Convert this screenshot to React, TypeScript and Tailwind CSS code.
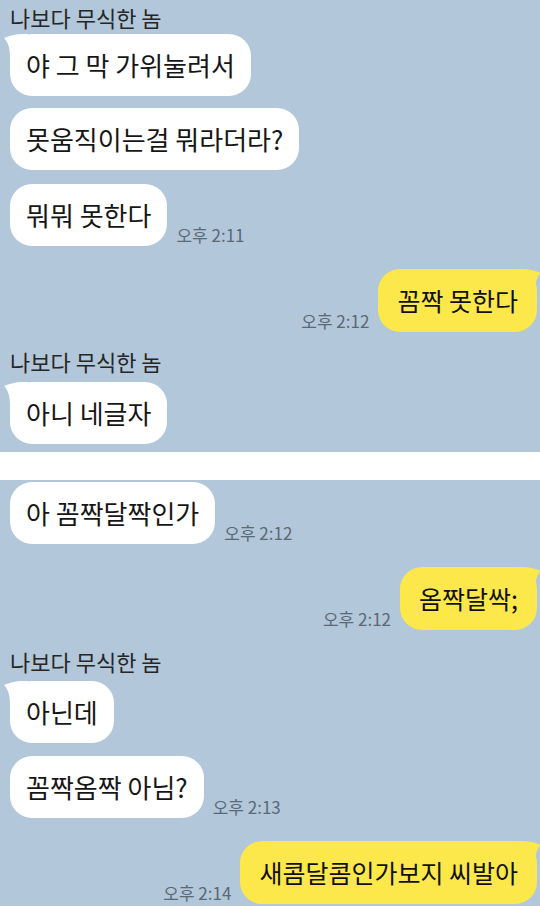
const FONT = "font-['Noto_Sans_CJK_KR','Noto_Sans',sans-serif]";

type BubbleProps = {
  text: string;
  tail?: boolean;
  className?: string;
};

const LeftTail = () => (
  <svg
    className="absolute -left-[6px] top-0"
    width="24"
    height="24"
    viewBox="0 0 24 24"
  >
    <path d="M0 4 C5 2 12 0 18 0 L24 0 L24 24 L6 24 C6 14 4 8 0 4 Z" fill="#ffffff" />
  </svg>
);

const RightTail = () => (
  <svg
    className="absolute -right-[4px] top-0 -scale-x-100"
    width="24"
    height="24"
    viewBox="0 0 24 24"
  >
    <path d="M0 4 C5 2 12 0 18 0 L24 0 L24 24 L6 24 C6 14 4 8 0 4 Z" fill="#fce84a" />
  </svg>
);

const Name = ({ className = "" }: { className?: string }) => (
  <div className={`text-[22px] leading-[28px] text-[#262626] ${className}`}>
    나보다 무식한 놈
  </div>
);

const Time = ({ time }: { time: string }) => (
  <span className="text-[17px] leading-[20px] text-[#5a6877] mb-[1px] whitespace-nowrap">
    {time}
  </span>
);

const WhiteBubble = ({ text, tail, className = "" }: BubbleProps) => (
  <div
    className={`relative bg-white rounded-[22px] px-[16px] py-[15px] text-[26px] leading-[32px] text-[#161616] whitespace-nowrap ${className}`}
  >
    {tail && <LeftTail />}
    <span className="relative">{text}</span>
  </div>
);

const YellowBubble = ({ text, tail, className = "" }: BubbleProps) => (
  <div
    className={`relative bg-[#fce84a] rounded-[22px] px-[19px] py-[15px] text-[25px] leading-[33px] text-[#111111] whitespace-nowrap ${className}`}
  >
    {tail && <RightTail />}
    <span className="relative">{text}</span>
  </div>
);

const Incoming = ({ text, tail, time, className = "" }: BubbleProps & { time?: string }) => (
  <div className={`flex items-end gap-[9px] ${className}`}>
    <WhiteBubble text={text} tail={tail} />
    {time && <Time time={time} />}
  </div>
);

const Outgoing = ({ text, time, className = "" }: { text: string; time: string; className?: string }) => (
  <div className={`flex items-end justify-end gap-[9px] ${className}`}>
    <Time time={time} />
    <YellowBubble text={text} tail />
  </div>
);

export default function App() {
  return (
    <div className={`w-[540px] h-[906px] bg-white flex flex-col overflow-hidden ${FONT}`}>
      {/* first screenshot */}
      <div className="h-[452px] bg-[#b2c7d9] flex flex-col pl-[10px] pr-[3px] pt-[3px] overflow-hidden">
        <Name />
        <div className="flex mt-[3px]">
          <WhiteBubble text="야 그 막 가위눌려서" tail />
        </div>
        <div className="flex mt-[12px]">
          <WhiteBubble text="못움직이는걸 뭐라더라?" />
        </div>
        <Incoming text="뭐뭐 못한다" time="오후 2:11" className="mt-[14px]" />
        <Outgoing text="꼼짝 못한다" time="오후 2:12" className="mt-[23px]" />
        <Name className="mt-[15px]" />
        <div className="flex mt-[7px]">
          <WhiteBubble text="아니 네글자" tail />
        </div>
      </div>

      {/* second screenshot */}
      <div className="h-[426px] mt-[28px] bg-[#b2c7d9] flex flex-col pl-[10px] pr-[3px] pt-[2px] overflow-hidden">
        <Incoming text="아 꼼짝달짝인가" time="오후 2:12" />
        <Outgoing text="옴짝달싹;" time="오후 2:12" className="mt-[23px]" />
        <Name className="mt-[17px]" />
        <div className="flex mt-[6px]">
          <WhiteBubble text="아닌데" tail />
        </div>
        <Incoming text="꼼짝옴짝 아님?" time="오후 2:13" className="mt-[13px]" />
        <Outgoing text="새콤달콤인가보지 씨발아" time="오후 2:14" className="mt-[23px]" />
      </div>
    </div>
  );
}
